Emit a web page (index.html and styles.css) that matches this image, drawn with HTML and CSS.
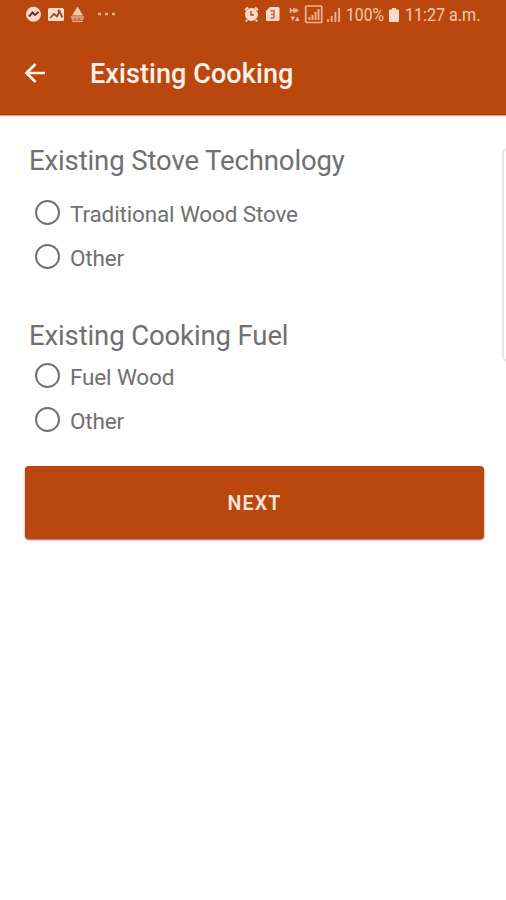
FILE: index.html
```html
<!DOCTYPE html>
<html lang="en">
<head>
<meta charset="utf-8">
<meta name="viewport" content="width=device-width, initial-scale=1">
<title>Existing Cooking</title>
<link rel="stylesheet" href="styles.css">
</head>
<body>
<header class="top">
  <div class="status">
    <svg class="status-icons" width="118" height="30" viewBox="0 0 118 30" aria-hidden="true">
      <circle cx="33.500" cy="14.300" r="7.500" fill="#fbdccb"/>
      <path d="M29 16.500l3.500-4 2.500 2.500 3.500-3" fill="none" stroke="#69351f" stroke-width="2"/>
      <rect x="48" y="8" width="16" height="13" rx="1.500" fill="#fbdccb"/>
      <path d="M50 18l4-4 3 2.500 2.500-5 3 6" fill="none" stroke="#8d482d" stroke-width="1.700"/>
      <circle cx="59" cy="11" r="1.500" fill="#a65235"/>
      <path d="M77.500 6.500l5.500 9h-11z" fill="#f8c7ae"/>
      <path d="M71 17h13M71.500 19h3m1 0h3m1 0h4M72 21.300h11" stroke="#eeb08f" stroke-width="1.300"/>
      <path d="M98 14h3m4 0h3m4 0h3" stroke="#eda982" stroke-width="2.600"/>
    </svg>
    <div class="status-right">
      <svg width="102" height="30" viewBox="242 0 102 30" aria-hidden="true">
        <circle cx="251.500" cy="14.500" r="6.500" fill="#fbdccb"/>
        <path d="M245 10l3-2.500m7 0l3 2.500M247 20l-1 1.500m10-1.500l1 1.500" stroke="#fbdccb" stroke-width="2"/>
        <path d="M251 11v4h3" fill="none" stroke="#b64b1c" stroke-width="1.500"/>
        <path d="M266 11l4-4h8q1.500 0 1.500 1.500v11q0 1.500-1.500 1.500h-10.500q-1.500 0-1.500-1.500z" fill="#fbdccb"/>
        <path d="M270.500 11h3.500v7m-3-3.500h3m-3.500 3.500h3.500" fill="none" stroke="#b76843" stroke-width="1.500"/>
        <path d="M290.500 8v5m3.500-5v5m-3.500-2.500h3.500m2-2v4m-1.500-2h4" fill="none" stroke="#f3b997" stroke-width="1.500"/>
        <path d="M290.500 16.500h4.500l-2.200 4.500zM295 21h4.500l-2.200-4.500z" fill="#f2b99b"/>
        <rect x="305.700" y="6" width="16" height="16.500" rx="1" fill="none" stroke="#f3b291" stroke-width="1.700"/>
        <path d="M309.500 20v-3m3 3v-5m3 5V12m3 8V9" stroke="#f3b291" stroke-width="1.900"/>
        <path d="M328 22v-3m3.700 3v-6m3.700 6V12m3.700 10V8" stroke="#eeb08f" stroke-width="1.900"/>
      </svg>
      <span class="battery-text"><span class="condensed">100%</span></span>
      <svg class="battery" width="10" height="14" viewBox="0 0 10 14" aria-hidden="true"><path d="M3 0h4v1.500h2q1 0 1 1V13q0 1-1 1H1q-1 0-1-1V2.500q0-1 1-1h2z" fill="#fbdccb"/></svg>
      <span class="condensed clock">11:27 a.m.</span>
    </div>
  </div>
  <div class="appbar">
    <svg class="back" width="22" height="22" viewBox="0 0 22 22" role="img" aria-label="Back"><path d="M21 11H3M11.500 2L2.500 11l9 9" fill="none" stroke="#fff2eb" stroke-width="2.700"/></svg>
    <h1 class="title">Existing Cooking</h1>
  </div>
</header>
<main class="content">
  <section class="group stove">
    <h2 class="heading">Existing Stove Technology</h2>
    <label class="option"><input class="radio" type="radio" name="stove"><span>Traditional Wood Stove</span></label>
    <label class="option"><input class="radio" type="radio" name="stove"><span>Other</span></label>
  </section>
  <section class="group fuel">
    <h2 class="heading">Existing Cooking Fuel</h2>
    <label class="option"><input class="radio" type="radio" name="fuel"><span>Fuel Wood</span></label>
    <label class="option"><input class="radio" type="radio" name="fuel"><span>Other</span></label>
  </section>
  <button class="next" type="button">NEXT</button>
</main>
<div class="edge-handle"></div>
</body>
</html>
```
FILE: styles.css
```css
* { box-sizing: border-box; }

body {
  margin: 0;
  min-height: 900px;
  position: relative;
  overflow: hidden;
  background: #fefefe;
  color: #707070;
  font-family: Roboto, "Liberation Sans", sans-serif;
}

.top {
  height: 115px;
  background: #ba480e;
  border-bottom: 1px solid #a43c08;
  box-shadow: 0 1px 1px #d9a58c;
}

.status {
  height: 30px;
  display: flex;
  justify-content: space-between;
  color: #f8c8ae;
  font-size: 18.500px;
  line-height: 31px;
}

.status-right {
  width: 264px;
  display: flex;
  align-items: center;
}

.status-right > * { flex: none; }

.condensed {
  display: inline-block;
  transform: scaleX(.85);
  transform-origin: left;
  white-space: nowrap;
}

.clock { transform: scaleX(.87); }

.battery-text { width: 44px; padding-left: 2px; }

.battery { margin: 0 6px 0 1px; }

.appbar {
  height: 84px;
  padding: 1px 24px 0;
  display: flex;
  align-items: center;
}

.back { margin-top: 0; }

.title {
  margin: 3px 0 0 44px;
  color: #fff2eb;
  font-size: 27px;
  font-weight: 500;
  line-height: 32px;
  letter-spacing: .080px;
}

.content {
  padding: 29px 22px 0 25px;
  display: flex;
  flex-direction: column;
}

.group { display: flex; flex-direction: column; }

.heading {
  margin: 0 0 0 4px;
  font-size: 27.500px;
  font-weight: 400;
  line-height: 34px;
  letter-spacing: -.120px;
}

.option {
  height: 44px;
  padding-left: 10px;
  display: flex;
  align-items: center;
  font-size: 22.500px;
  letter-spacing: -.140px;
}

.option span { padding-top: 3px; }

.stove .heading { margin-bottom: 12px; }

.fuel { margin-top: 41px; }

.radio {
  appearance: none;
  width: 25px;
  height: 25px;
  margin: 0 10px 0 0;
  border: 2px solid #717171;
  border-radius: 50%;
}

.radio:checked { background: radial-gradient(#ba480e 45%, transparent 50%); }

.next {
  height: 73px;
  margin-top: 25px;
  padding: 2px 0 0;
  border: 0;
  border-radius: 4px;
  background: #ba480e;
  box-shadow: 0 1px 2px #8d6654;
  color: #fbe4d9;
  font: 600 19.500px Roboto, sans-serif;
  letter-spacing: 1.200px;
}

.edge-handle {
  position: absolute;
  top: 148px;
  right: -8px;
  width: 12px;
  height: 214px;
  border: 2px solid #e4e4e4;
  border-radius: 8px;
}
```
